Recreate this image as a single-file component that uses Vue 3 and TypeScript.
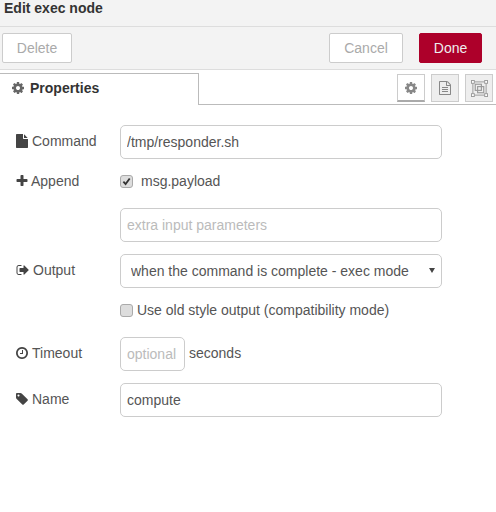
<template>
  <div class="tray">
    <div class="tray-title">Edit exec node</div>
    <div class="tray-toolbar">
      <button class="btn">Delete</button>
      <div class="spacer"></div>
      <button class="btn cancel">Cancel</button>
      <button class="btn primary">Done</button>
    </div>
    <div class="tabs">
      <div class="tab">
        <svg class="tab-icon" viewBox="0 0 1792 1792"><path :d="icons.cog" /></svg>
        Properties
      </div>
      <div class="tab-buttons">
        <div class="tab-btn active">
          <svg viewBox="0 0 1792 1792"><path :d="icons.cog" /></svg>
        </div>
        <div class="tab-btn">
          <svg viewBox="0 0 1792 1792"><path :d="icons.fileText" /></svg>
        </div>
        <div class="tab-btn">
          <svg viewBox="0 0 18 18" class="ungroup">
            <rect x="2" y="2" width="14" height="14" fill="none" stroke-width="1" />
            <rect x="4.500" y="4.500" width="6.500" height="6.500" fill="none" stroke-width="1.200" />
            <rect x="7" y="7" width="6.500" height="6.500" fill="none" stroke-width="1.200" />
            <rect x="0.500" y="0.500" width="3" height="3" class="handle" />
            <rect x="14.500" y="0.500" width="3" height="3" class="handle" />
            <rect x="0.500" y="14.500" width="3" height="3" class="handle" />
            <rect x="14.500" y="14.500" width="3" height="3" class="handle" />
          </svg>
        </div>
      </div>
    </div>

    <form class="form" @submit.prevent>
      <div class="row">
        <label class="label">
          <svg viewBox="0 0 1792 1792"><path :d="icons.file" /></svg>
          <span>Command</span>
        </label>
        <input class="field" type="text" value="/tmp/responder.sh" />
      </div>
      <div class="row check-row">
        <label class="label append">
          <svg viewBox="0 0 1792 1792"><path :d="icons.plus" /></svg>
          <span>Append</span>
        </label>
        <span class="checkbox">
          <svg viewBox="0 0 12 12"><path d="M2.600 6.200 5 8.800 9.500 2.800" /></svg>
        </span>
        <span class="append-text">msg.payload</span>
      </div>
      <div class="row">
        <div class="label"></div>
        <input class="field" type="text" placeholder="extra input parameters" />
      </div>
      <div class="row">
        <label class="label output">
          <svg viewBox="0 0 1792 1792"><path :d="icons.signOut" /></svg>
          <span>Output</span>
        </label>
        <div class="select-wrap">
          <select class="field select">
            <option>when the command is complete - exec mode</option>
          </select>
          <span class="arrow"></span>
        </div>
      </div>
      <div class="row check-row">
        <div class="label"></div>
        <span class="checkbox"></span>
        <span class="old-text">Use old style output (compatibility mode)</span>
      </div>
      <div class="row">
        <label class="label">
          <svg viewBox="0 0 1792 1792"><path :d="icons.clock" /></svg>
          <span>Timeout</span>
        </label>
        <input class="field short" type="text" placeholder="optional" />
        <span class="unit">seconds</span>
      </div>
      <div class="row">
        <label class="label">
          <svg viewBox="0 0 1792 1792"><path :d="icons.tag" /></svg>
          <span>Name</span>
        </label>
        <input class="field" type="text" value="compute" />
      </div>
    </form>
  </div>
</template>

<script setup lang="ts">
const icons = {
  cog: 'M1152 896q0-106-75-181t-181-75-181 75-75 181 75 181 181 75 181-75 75-181zm512-109v222q0 12-8 23t-20 13l-185 28q-19 54-39 91 35 50 107 138 10 12 10 25t-9 23q-27 37-99 108t-94 71q-12 0-26-9l-138-108q-44 23-91 38-16 136-29 186-7 28-36 28h-222q-14 0-24.500-8.500t-11.500-21.500l-28-184q-49-16-90-37l-141 107q-10 9-25 9-14 0-25-11-126-114-165-168-7-10-7-23 0-12 8-23 15-21 51-66.500t54-70.500q-27-50-41-99l-183-27q-13-2-21-12.500t-8-23.500v-222q0-12 8-23t19-13l186-28q14-46 39-92-40-57-107-138-10-12-10-24 0-10 9-23 26-36 98.500-107.500t94.500-71.500q13 0 26 10l138 107q44-23 91-38 16-136 29-186 7-28 36-28h222q14 0 24.500 8.500t11.500 21.500l28 184q49 16 90 37l142-107q9-9 24-9 13 0 25 10 129 119 165 170 7 8 7 22 0 12-8 23-15 21-51 66.500t-54 70.500q26 50 41 98l183 28q13 2 21 12.500t8 23.500z',
  file: 'M1152 512v-472q22 14 36 28l408 408q14 14 28 36h-472zm-128 32q0 40 28 68t68 28h544v1056q0 40-28 68t-68 28h-1344q-40 0-68-28t-28-68v-1600q0-40 28-68t68-28h800v544z',
  fileText: 'M1596 380q28 28 48 76t20 88v1152q0 40-28 68t-68 28h-1344q-40 0-68-28t-28-68v-1600q0-40 28-68t68-28h896q40 0 88 20t76 48zm-444-244v376h376q-10-29-22-41l-313-313q-12-12-41-22zm384 1528v-1024h-416q-40 0-68-28t-28-68v-416h-768v1536h1280zm-1024-864q0-14 9-23t23-9h704q14 0 23 9t9 23v64q0 14-9 23t-23 9h-704q-14 0-23-9t-9-23v-64zm736 224q14 0 23 9t9 23v64q0 14-9 23t-23 9h-704q-14 0-23-9t-9-23v-64q0-14 9-23t23-9h704zm0 256q14 0 23 9t9 23v64q0 14-9 23t-23 9h-704q-14 0-23-9t-9-23v-64q0-14 9-23t23-9h704z',
  plus: 'M1600 736v192q0 40-28 68t-68 28h-416v416q0 40-28 68t-68 28h-192q-40 0-68-28t-28-68v-416h-416q-40 0-68-28t-28-68v-192q0-40 28-68t68-28h416v-416q0-40 28-68t68-28h192q40 0 68 28t28 68v416h416q40 0 68 28t28 68z',
  signOut: 'M704 1440q0 4 1 20t.500 26.500-3 23.500-10 19.500-20.500 6.500h-320q-119 0-203.500-84.500t-84.500-203.500v-704q0-119 84.500-203.500t203.500-84.500h320q13 0 22.500 9.500t9.500 22.500q0 4 1 20t.500 26.500-3 23.500-10 19.500-20.500 6.500h-320q-66 0-113 47t-47 113v704q0 66 47 113t113 47h312l11.500 1 11.500 3 8 5.500 7 9 2 13.500zm928-544q0 26-19 45l-544 544q-19 19-45 19t-45-19-19-45v-288h-448q-26 0-45-19t-19-45v-384q0-26 19-45t45-19h448v-288q0-26 19-45t45-19 45 19l544 544q19 19 19 45z',
  clock: 'M1024 544v448q0 14-9 23t-23 9h-320q-14 0-23-9t-9-23v-64q0-14 9-23t23-9h224v-352q0-14 9-23t23-9h64q14 0 23 9t9 23zm416 352q0-148-73-273t-198-198-273-73-273 73-198 198-73 273 73 273 198 198 273 73 273-73 198-198 73-273zm224 0q0 209-103 385.500t-279.500 279.500-385.500 103-385.500-103-279.500-279.500-103-385.500 103-385.500 279.500-279.500 385.500-103 385.500 103 279.500 279.500 103 385.500z',
  tag: 'M576 448q0-53-37.500-90.500t-90.500-37.500-90.500 37.500-37.500 90.500 37.500 90.500 90.500 37.500 90.500-37.500 37.500-90.500zm1067 576q0 53-37 90l-491 492q-39 37-91 37-53 0-90-37l-715-716q-38-37-64.500-101t-26.500-117v-416q0-52 38-90t90-38h416q53 0 117 26.500t102 64.500l715 714q37 39 37 91z'
}
</script>

<style>
html,
body {
  margin: 0;
  background: #fff;
}
</style>

<style scoped>
.tray {
  width: 496px;
  height: 512px;
  overflow: hidden;
  background: #fff;
  font-family: "Liberation Sans", Arial, sans-serif;
  font-size: 14px;
  color: #555;
}

.tray-title {
  height: 27px;
  box-sizing: border-box;
  padding: 0 4px;
  line-height: 17px;
  font-weight: 700;
  color: #333;
  background: #f3f3f3;
  border-bottom: 1px solid #ddd;
}

.tray-toolbar {
  height: 43px;
  box-sizing: border-box;
  display: flex;
  align-items: flex-start;
  gap: 16px;
  padding: 6px 14px 0 2px;
  background: #f3f3f3;
  border-bottom: 1px solid #ddd;
}

.spacer {
  flex: 1;
}

.btn {
  height: 30px;
  width: 70px;
  box-sizing: border-box;
  padding: 0;
  font: inherit;
  color: #aaa;
  background: #fff;
  border: 1px solid #ccc;
  border-radius: 2px;
}

.btn.cancel {
  width: 74px;
}

.btn.primary {
  width: 63px;
  color: #eee;
  background: #ad002a;
  border-color: #ad002a;
}

.tabs {
  height: 35px;
  box-sizing: border-box;
  display: flex;
  justify-content: space-between;
  padding-top: 3px;
  background: #fff;
  border-bottom: 1px solid #bbb;
}

.tab {
  width: 199px;
  height: 32px;
  box-sizing: border-box;
  display: flex;
  align-items: center;
  gap: 5px;
  padding: 0 0 3px 11px;
  font-weight: 700;
  color: #333;
  background: #fff;
  border-top: 1px solid #bbb;
  border-right: 1px solid #bbb;
}

.tab-icon {
  width: 14px;
  height: 14px;
  fill: #666;
}

.tab-buttons {
  display: flex;
  gap: 6px;
  padding: 1px 3px 0 0;
}

.tab-btn {
  width: 28px;
  height: 28px;
  box-sizing: border-box;
  display: flex;
  align-items: center;
  justify-content: center;
  background: #eee;
  border: 1px solid #ccc;
}

.tab-btn.active {
  background: #fff;
  border-bottom: 2px solid #aaa;
}

.tab-btn svg {
  width: 14px;
  height: 14px;
  fill: #888;
}

.tab-btn .ungroup {
  width: 17px;
  height: 17px;
  stroke: #999;
}

.ungroup .handle {
  fill: #fff;
  stroke-width: 1;
}

.form {
  padding: 20px 0 0 16px;
}

.row {
  display: flex;
  align-items: center;
  min-height: 34px;
  margin-bottom: 12px;
}

.check-row {
  min-height: 25px;
}

.label {
  width: 104px;
  flex: none;
  display: flex;
  align-items: center;
  gap: 3px;
  height: 20px;
  margin-top: -2px;
}

.check-row .label,
.check-row span {
  margin-top: -5px;
}

.label svg {
  width: 14px;
  height: 14px;
  margin-left: -1px;
  fill: #444;
}

.label.output svg {
  margin-left: 0;
}

.label.append span {
  margin-left: -1px;
  margin-top: 0;
}

.field {
  width: 322px;
  height: 34px;
  box-sizing: border-box;
  padding: 0 6px;
  font: inherit;
  color: #555;
  background: #fff;
  border: 1px solid #ccc;
  border-radius: 5px;
  outline: none;
}

.field::placeholder {
  color: #bbb;
  opacity: 1;
}

.field.short {
  width: 65px;
}

.unit {
  margin-left: 4px;
  margin-top: -2px;
}

.select-wrap {
  position: relative;
  width: 322px;
}

.select {
  display: block;
  appearance: none;
  padding: 0 10px;
}

.arrow {
  position: absolute;
  top: 14px;
  right: 7px;
  width: 0;
  height: 0;
  border-left: 3px solid transparent;
  border-right: 3px solid transparent;
  border-top: 5px solid #444;
}

.checkbox {
  width: 13px;
  height: 13px;
  flex: none;
  box-sizing: border-box;
  display: flex;
  background: #ddd;
  border: 1px solid #aaa;
  border-radius: 3px;
}

.checkbox svg {
  width: 11px;
  height: 11px;
  fill: none;
  stroke: #333;
  stroke-width: 2;
}

.append-text {
  margin-left: 8px;
}

.old-text {
  margin-left: 4px;
}
</style>
